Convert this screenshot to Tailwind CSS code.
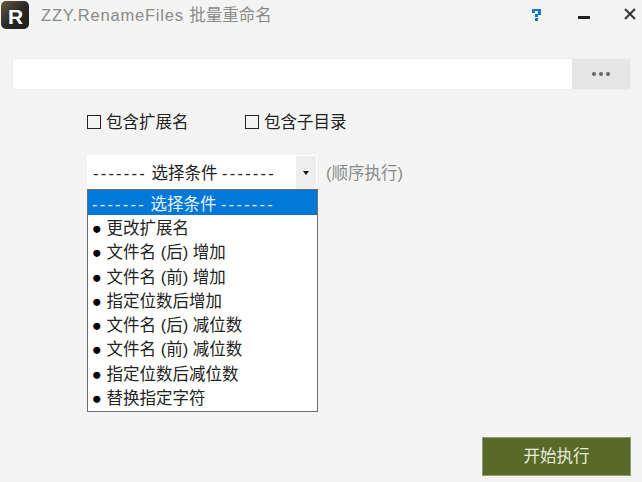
<!DOCTYPE html>
<html lang="zh">
<head>
  <meta charset="UTF-8" />
  <title>ZZY.RenameFiles</title>
  <script src="https://cdn.jsdelivr.net/npm/@tailwindcss/browser@4"></script>
</head>
<body class="m-0 bg-[#f4f4f4] overflow-hidden font-['Liberation_Sans','Noto_Sans_CJK_SC',sans-serif] text-[16.5px] text-[#222]">
  <div class="w-[642px] h-[482px] flex flex-col relative">
    <!-- title bar -->
    <header class="h-[30px] flex items-center pl-[1px]">
      <div class="w-[28px] h-[28px] rounded-[5px] bg-gradient-to-br from-[#6b5a35] via-[#2a2a2a] to-[#1e1e1e] flex items-center justify-center text-white font-bold text-[21px] pt-[3px] pl-[1px]">R</div>
      <span class="ml-[12px] text-[16.5px] text-[#8a8a8a] tracking-[0.8px] whitespace-nowrap">ZZY.RenameFiles <span class="tracking-normal">批量重命名</span></span>
      <div class="ml-auto flex items-center">
        <svg class="w-[10px] h-[12px] mt-[-1px]" viewBox="0 0 10 12"><path d="M0 0h9v6H6v2H3V5h3V2H3v2H0zM3 9h3v3H3z" fill="#0a78d4"/></svg>
        <span class="ml-[36px] w-[12px] h-[3px] mt-[4px] bg-[#222]"></span>
        <svg class="ml-[34px] mr-[6px] w-[12px] h-[12px] mb-[2px]" viewBox="0 0 12 12"><path d="M1 1l10 10M11 1L1 11" stroke="#333" stroke-width="2" fill="none"/></svg>
      </div>
    </header>

    <!-- path row -->
    <div class="mt-[28px] mx-[12px] h-[32px] flex border border-[#eeeeee] w-[619px]">
      <div class="flex-1 bg-white"></div>
      <div class="w-[58px] bg-[#e6e6e6] flex items-center justify-center gap-[3px]">
        <i class="w-[4px] h-[4px] rounded-full bg-[#666]"></i>
        <i class="w-[4px] h-[4px] rounded-full bg-[#666]"></i>
        <i class="w-[4px] h-[4px] rounded-full bg-[#666]"></i>
      </div>
    </div>

    <!-- checkboxes -->
    <div class="mt-[21px] ml-[87px] h-[22px] flex items-center">
      <label class="flex items-center w-[158px]">
        <span class="w-[14px] h-[14px] border border-[#222] bg-[#f4f4f4]"></span>
        <span class="ml-[5px]">包含扩展名</span>
      </label>
      <label class="flex items-center">
        <span class="w-[14px] h-[14px] border border-[#222] bg-[#f4f4f4]"></span>
        <span class="ml-[5px]">包含子目录</span>
      </label>
    </div>

    <!-- select -->
    <div class="mt-[22px] ml-[87px] flex items-center">
      <div class="w-[230px] h-[35px] bg-white flex items-center pl-[6px] pr-[1px] whitespace-nowrap">
        <span class="flex-1 pt-[2px]"><span class="tracking-[2.2px]">-------</span> 选择条件 <span class="tracking-[2.2px]">-------</span></span>
        <span class="w-[20px] h-[33px] bg-[#eeeeee] flex items-center justify-center">
          <span class="border-x-[3.5px] border-x-transparent border-t-[4px] border-t-[#111]"></span>
        </span>
      </div>
      <span class="ml-[9px] text-[#8a8a8a] pt-[1px]">(顺序执行)</span>
    </div>

    <!-- dropdown list -->
    <ul class="absolute left-[87px] top-[189px] w-[231px] h-[223px] m-0 p-0 list-none bg-white border border-[#6e6e6e] whitespace-nowrap">
      <li class="h-[25px] bg-[#0078d7] text-[#e8f3fc] pl-[4px] leading-[28px]"><span class="tracking-[2.2px]">-------</span> 选择条件 <span class="tracking-[2.2px]">-------</span></li>
      <li class="h-[24.3px] leading-[26px] pl-[4px] text-black">● <span class="text-[#222]">更改扩展名</span></li>
      <li class="h-[24.3px] leading-[26px] pl-[4px] text-black">● <span class="text-[#222]">文件名 (后) 增加</span></li>
      <li class="h-[24.3px] leading-[26px] pl-[4px] text-black">● <span class="text-[#222]">文件名 (前) 增加</span></li>
      <li class="h-[24.3px] leading-[26px] pl-[4px] text-black">● <span class="text-[#222]">指定位数后增加</span></li>
      <li class="h-[24.3px] leading-[26px] pl-[4px] text-black">● <span class="text-[#222]">文件名 (后) 减位数</span></li>
      <li class="h-[24.3px] leading-[26px] pl-[4px] text-black">● <span class="text-[#222]">文件名 (前) 减位数</span></li>
      <li class="h-[24.3px] leading-[26px] pl-[4px] text-black">● <span class="text-[#222]">指定位数后减位数</span></li>
      <li class="h-[24.3px] leading-[26px] pl-[4px] text-black">● <span class="text-[#222]">替换指定字符</span></li>
    </ul>

    <!-- start button -->
    <div class="mt-auto mb-[6px] ml-auto mr-[11px] w-[149px] h-[39px] bg-[#586a2a] border border-[#8f9c6c] text-[#e8ecdc] flex items-center justify-center">开始执行</div>
  </div>
</body>
</html>
